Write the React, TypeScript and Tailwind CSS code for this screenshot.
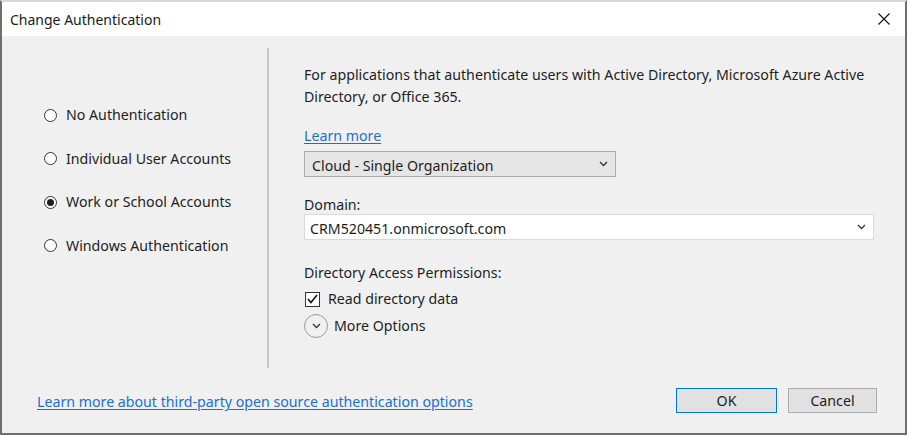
import React from "react";

const font = { fontFamily: '"Noto Sans", "Open Sans", sans-serif' };

function Radio({ label, checked }: { label: string; checked?: boolean }) {
  return (
    <div className="flex items-center h-[20px]">
      <div className="w-[13px] h-[13px] rounded-full border border-[#333333] bg-white flex items-center justify-center ml-[42px]">
        {checked && <div className="w-[7px] h-[7px] rounded-full bg-[#1e1e1e]" />}
      </div>
      <span className="ml-[9px] text-[14.2px] text-[#1e1e1e]">{label}</span>
    </div>
  );
}

function Chevron({ className }: { className?: string }) {
  return (
    <svg width="9" height="6" viewBox="0 0 9 6" className={className}>
      <path d="M1 1 L4.5 4.5 L8 1" fill="none" stroke="#333" strokeWidth="1.3" />
    </svg>
  );
}

export default function App() {
  return (
    <div
      className="w-[907px] h-[435px] bg-[#f0f0f0] border-l-2 border-r-2 border-b-2 border-t-2 border-l-[#6e6e6e] border-r-[#6e6e6e] border-b-[#6e6e6e] border-t-[#d8d8d8] flex flex-col overflow-hidden"
      style={font}
    >
      {/* Title bar */}
      <div className="h-[34px] bg-white flex items-center justify-between shrink-0">
        <span className="ml-[8px] text-[14px] text-[#1a1a1a]">Change Authentication</span>
        <svg width="12" height="12" viewBox="0 0 12 12" className="mr-[15px]">
          <path d="M0.5 0.5 L11.5 11.5 M11.5 0.5 L0.5 11.5" stroke="#111" strokeWidth="1.1" />
        </svg>
      </div>

      {/* Body */}
      <div className="flex pt-[12px] h-[332px] shrink-0">
        <div className="w-[265px] shrink-0 pt-[57px] flex flex-col gap-[23.5px]">
          <Radio label="No Authentication" />
          <Radio label="Individual User Accounts" />
          <Radio label="Work or School Accounts" checked />
          <Radio label="Windows Authentication" />
        </div>
        <div className="w-[2px] shrink-0 bg-[#c8c8c8] self-stretch" />
        <div className="flex-1 min-w-0 pl-[35px] pr-[28px] flex flex-col text-[14.2px] text-[#1e1e1e]">
          <p className="mt-[16px] leading-[22px] w-[572px]">
            For applications that authenticate users with Active Directory, Microsoft Azure Active Directory, or Office 365.
          </p>
          <a className="mt-[17px] leading-[22px] text-[#1c6fd1] underline underline-offset-2 w-fit">Learn more</a>
          <div className="mt-[4px] w-[312px] h-[26px] bg-[#e5e5e5] border border-[#acacac] flex items-center justify-between pl-[7px] pr-[7px]">
            <span className="pt-[3px]">Cloud - Single Organization</span>
            <Chevron />
          </div>
          <div className="mt-[18px] leading-[19px]">Domain:</div>
          <div className="w-[570px] h-[26px] bg-white border border-[#d9d9d9] flex items-center justify-between pl-[5px] pr-[7px]">
            <span className="pt-[3px]">CRM520451.onmicrosoft.com</span>
            <Chevron />
          </div>
          <div className="mt-[23px] leading-[20px]">Directory Access Permissions:</div>
          <div className="mt-[6px] h-[20px] flex items-center">
            <div className="ml-[1px] w-[15px] h-[15px] border border-[#333] bg-white flex items-center justify-center">
              <svg width="11" height="10" viewBox="0 0 11 10">
                <path d="M1 5 L4 8.5 L10 1" fill="none" stroke="#111" strokeWidth="1.6" />
              </svg>
            </div>
            <span className="ml-[8px]">Read directory data</span>
          </div>
          <div className="mt-[5px] h-[24px] flex items-center">
            <div className="w-[24px] h-[24px] rounded-full border border-[#9a9a9a] flex items-center justify-center">
              <Chevron />
            </div>
            <span className="ml-[6px]">More Options</span>
          </div>
        </div>
      </div>

      {/* Footer */}
      <div className="flex items-start justify-between pt-[20px] pl-[35px] pr-[28px]">
        <a className="mt-[3px] text-[14.2px] leading-[22px] text-[#1c6fd1] underline underline-offset-2">
          Learn more about third-party open source authentication options
        </a>
        <div className="flex gap-[11px]">
          <button className="w-[101px] h-[25px] bg-[#e1e1e1] border border-[#0078d7] text-[14.2px] text-[#1e1e1e]">OK</button>
          <button className="w-[89px] h-[25px] bg-[#e1e1e1] border border-[#adadad] text-[14.2px] text-[#1e1e1e]">Cancel</button>
        </div>
      </div>
    </div>
  );
}
